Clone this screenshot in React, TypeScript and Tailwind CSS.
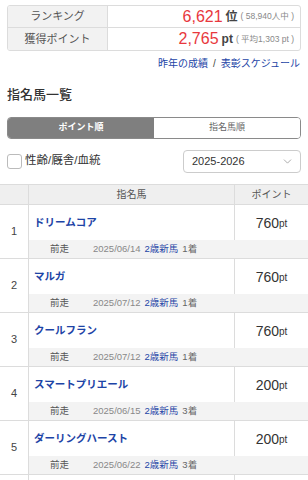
import { ChevronDown } from "lucide-react"

const horses = [
  { no: 1, name: "ドリームコア", pt: 760, date: "2025/06/14", race: "2歳新馬", rank: "1着" },
  { no: 2, name: "マルガ", pt: 760, date: "2025/07/12", race: "2歳新馬", rank: "1着" },
  { no: 3, name: "クールフラン", pt: 760, date: "2025/07/12", race: "2歳新馬", rank: "1着" },
  { no: 4, name: "スマートプリエール", pt: 200, date: "2025/06/15", race: "2歳新馬", rank: "3着" },
  { no: 5, name: "ダーリングハースト", pt: 200, date: "2025/06/22", race: "2歳新馬", rank: "3着" },
  { no: 6, name: "エイシンソニック", pt: 0, date: "2025/06/29", race: "2歳新馬", rank: "5着" },
]

const font = { fontFamily: '"Liberation Sans", "Noto Sans CJK JP", sans-serif' }

function SummaryTable() {
  return (
    <div className="mx-[7px] mt-[5px] border border-[#dcdcdc] rounded-[3px] overflow-hidden">
      <div className="flex h-[22px] border-b border-[#dcdcdc]">
        <div className="w-[100px] bg-[#f2f2f2] border-r border-[#dcdcdc] flex items-center justify-center text-[11px] text-[#555]">
          ランキング
        </div>
        <div className="flex-1 flex items-center justify-end pr-[6px]">
          <span className="text-[16px] font-medium text-[#e8383d] leading-none">6,621</span>
          <span className="ml-[3px] text-[12px] font-bold text-[#444]">位</span>
          <span className="ml-[3px] text-[8.5px] text-[#888]">( 58,940人中 )</span>
        </div>
      </div>
      <div className="flex h-[22px]">
        <div className="w-[100px] bg-[#f2f2f2] border-r border-[#dcdcdc] flex items-center justify-center text-[11px] text-[#555]">
          獲得ポイント
        </div>
        <div className="flex-1 flex items-center justify-end pr-[6px]">
          <span className="text-[16px] font-medium text-[#e8383d] leading-none">2,765</span>
          <span className="ml-[3px] text-[12px] font-bold text-[#444]">pt</span>
          <span className="ml-[3px] text-[8.5px] text-[#888]">( 平均1,303 pt )</span>
        </div>
      </div>
    </div>
  )
}

function HorseRow({ h }: { h: (typeof horses)[number] }) {
  return (
    <div className="flex h-[54px] border-b border-[#dcdcdc]">
      <div className="w-[29px] shrink-0 border-r border-[#dcdcdc] flex items-center justify-center text-[11px] text-[#444]">
        {h.no}
      </div>
      <div className="flex-1 flex flex-col">
        <div className="flex h-[35px]">
          <div className="flex-1 border-r border-[#dcdcdc] flex items-center pl-[5px] text-[10.5px] font-bold text-[#1d44a6]">
            {h.name}
          </div>
          <div className="w-[73px] flex items-center justify-center text-[#333]">
            <span className="text-[14px] leading-none">{h.pt}</span>
            <span className="text-[10px] leading-none mt-[2px]">pt</span>
          </div>
        </div>
        <div className="flex-1 bg-[#f3f3f3] flex items-center text-[9.5px] text-[#666]">
          <span className="ml-[21px] text-[#555]">前走</span>
          <span className="ml-[24px] text-[#888]">{h.date}</span>
          <span className="ml-[4px] text-[#1d44a6]">{h.race}</span>
          <span className="ml-[4px] text-[#666]">{h.rank}</span>
        </div>
      </div>
    </div>
  )
}

export default function App() {
  return (
    <div className="w-[308px] h-[480px] overflow-hidden bg-white" style={font}>
      <SummaryTable />

      <div className="mt-[5px] mr-[8px] flex justify-end items-center h-[14px] text-[10px] text-[#1d44a6]">
        <span>昨年の成績</span>
        <span className="mx-[5px] text-[#444]">/</span>
        <span>表彰スケジュール</span>
      </div>

      <h2 className="ml-[7px] mt-[17px] text-[13px] font-medium text-[#333] leading-[16px]">指名馬一覧</h2>

      <div className="mx-[7px] mt-[14px] flex h-[22px] rounded-[4px] border border-[#8a8a8a] overflow-hidden text-[9px]">
        <div className="flex-1 bg-[#7f7f7f] text-white font-bold flex items-center justify-center">ポイント順</div>
        <div className="flex-1 bg-white text-[#666] flex items-center justify-center">指名馬順</div>
      </div>

      <div className="mx-[7px] mt-[10px] flex items-center justify-between h-[24px]">
        <label className="flex items-center">
          <span className="w-[15px] h-[15px] rounded-[3px] border border-[#bbb] bg-white" />
          <span className="ml-[3px] text-[11.5px] text-[#333]">性齢/厩舎/血統</span>
        </label>
        <div className="w-[118px] h-[23px] border border-[#ccc] rounded-[4px] flex items-center justify-between pl-[8px] pr-[6px]">
          <span className="text-[11px] text-[#333]">2025-2026</span>
          <ChevronDown className="w-[13px] h-[13px] text-[#999]" strokeWidth={1.5} />
        </div>
      </div>

      <div className="mt-[11px] border-t border-[#dcdcdc]">
        <div className="flex h-[20px] bg-[#efefef] border-b border-[#dcdcdc] text-[10px] text-[#555]">
          <div className="w-[29px] border-r border-[#dcdcdc]" />
          <div className="flex-1 border-r border-[#dcdcdc] flex items-center justify-center">指名馬</div>
          <div className="w-[73px] flex items-center justify-center">ポイント</div>
        </div>
        {horses.map((h) => (
          <HorseRow key={h.no} h={h} />
        ))}
      </div>
    </div>
  )
}
